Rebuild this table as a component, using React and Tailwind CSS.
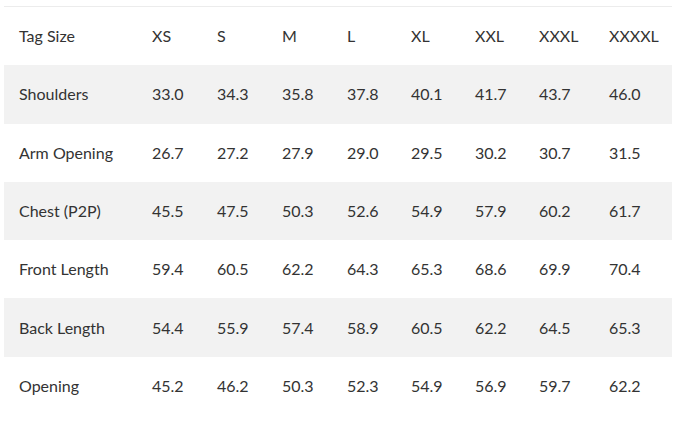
const SIZES = ['XS', 'S', 'M', 'L', 'XL', 'XXL', 'XXXL', 'XXXXL']

const ROWS = [
  { label: 'Shoulders', values: ['33.0', '34.3', '35.8', '37.8', '40.1', '41.7', '43.7', '46.0'] },
  { label: 'Arm Opening', values: ['26.7', '27.2', '27.9', '29.0', '29.5', '30.2', '30.7', '31.5'] },
  { label: 'Chest (P2P)', values: ['45.5', '47.5', '50.3', '52.6', '54.9', '57.9', '60.2', '61.7'] },
  { label: 'Front Length', values: ['59.4', '60.5', '62.2', '64.3', '65.3', '68.6', '69.9', '70.4'] },
  { label: 'Back Length', values: ['54.4', '55.9', '57.4', '58.9', '60.5', '62.2', '64.5', '65.3'] },
  { label: 'Opening', values: ['45.2', '46.2', '50.3', '52.3', '54.9', '56.9', '59.7', '62.2'] },
]

// column widths of the size columns
const COL_W = ['w-[65px]', 'w-[65px]', 'w-[65px]', 'w-[64px]', 'w-[64px]', 'w-[64px]', 'w-[70px]', 'w-[70px]']

function Row({ label, values, shaded }) {
  return (
    <div className={`flex items-center h-[58.3px] ${shaded ? 'bg-[#f2f2f2]' : 'bg-white'}`}>
      <div className="w-[133px] shrink-0 pl-[15px]">{label}</div>
      {values.map((v, i) => (
        <div key={i} className={`${COL_W[i]} shrink-0 pl-[15px]`}>{v}</div>
      ))}
    </div>
  )
}

export default function App() {
  return (
    <div className="w-[676px] h-[421px] bg-white pt-[6px] px-[4px]">
      <div
        className="border-t border-[#ececec] text-[#333333] text-[16px] leading-[24px]"
        style={{ fontFamily: "Lato, 'Noto Sans', sans-serif" }}
      >
        <Row label="Tag Size" values={SIZES} />
        {ROWS.map((r, i) => (
          <Row key={r.label} label={r.label} values={r.values} shaded={i % 2 === 0} />
        ))}
      </div>
    </div>
  )
}
